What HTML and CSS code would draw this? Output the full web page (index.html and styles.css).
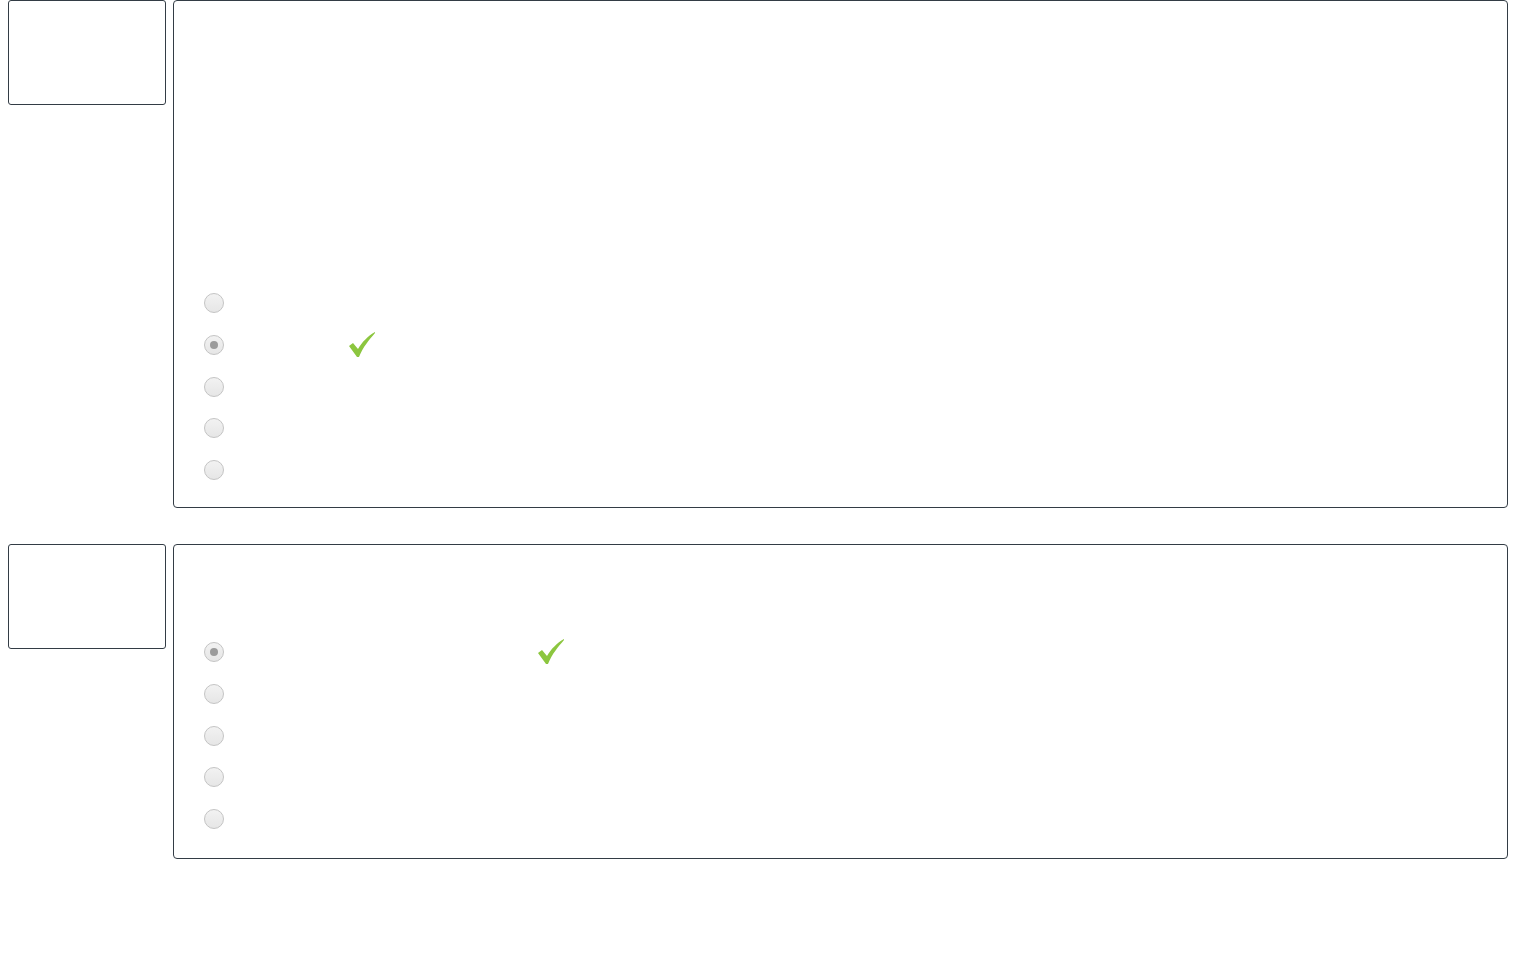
FILE: index.html
```html
<!DOCTYPE html>
<html>
<head>
<meta charset="utf-8">
<link rel="stylesheet" href="styles.css">
</head>
<body>
<div class="page">
  <section class="question">
    <div class="qnum"></div>
    <div class="qbody q1">
      <div class="prompt tall"></div>
      <ul class="answers">
        <li class="answer"><span class="radio"></span></li>
        <li class="answer"><span class="radio checked"></span><svg class="check c1" viewBox="0 0 26 26"><path d="M0 14 L4 11 L9 17 C13 10 19 4 26 0 L26 1 C20 8 14 15 10 25 L8 25 Z"/></svg></li>
        <li class="answer"><span class="radio"></span></li>
        <li class="answer"><span class="radio"></span></li>
        <li class="answer"><span class="radio"></span></li>
      </ul>
    </div>
  </section>
  <section class="question">
    <div class="qnum"></div>
    <div class="qbody q2">
      <div class="prompt short"></div>
      <ul class="answers">
        <li class="answer"><span class="radio checked"></span><svg class="check c2" viewBox="0 0 26 26"><path d="M0 14 L4 11 L9 17 C13 10 19 4 26 0 L26 1 C20 8 14 15 10 25 L8 25 Z"/></svg></li>
        <li class="answer"><span class="radio"></span></li>
        <li class="answer"><span class="radio"></span></li>
        <li class="answer"><span class="radio"></span></li>
        <li class="answer"><span class="radio"></span></li>
      </ul>
    </div>
  </section>
</div>
</body>
</html>
```
FILE: styles.css
```css
html, body {
  margin: 0;
  padding: 0;
  background: #fff;
  font-family: "Liberation Sans", Arial, sans-serif;
}
.page {
  padding: 0 8px;
  display: flex;
  flex-direction: column;
  gap: 36px;
}
.question {
  display: flex;
  align-items: flex-start;
  gap: 7px;
}
.qnum {
  width: 158px;
  height: 105px;
  box-sizing: border-box;
  border: 1px solid #333c45;
  border-radius: 3px;
  flex: none;
}
.qbody {
  flex: 1;
  box-sizing: border-box;
  border: 1px solid #333c45;
  border-radius: 4px;
  padding: 0 30px 27px 30px;
}
.qbody.q2 { padding-bottom: 29px; }
.prompt.tall { height: 292px; }
.prompt.short { height: 97px; }
.answers {
  list-style: none;
  margin: 0;
  padding: 0;
  display: flex;
  flex-direction: column;
  gap: 21.75px;
}
.answer {
  height: 20px;
  display: flex;
  align-items: center;
}
.radio {
  width: 20px;
  height: 20px;
  box-sizing: border-box;
  border-radius: 50%;
  border: 1.5px solid #c4c4c4;
  background: linear-gradient(#f2f2f2, #e6e6e6);
  display: flex;
  align-items: center;
  justify-content: center;
  flex: none;
}
.radio.checked::after {
  content: "";
  width: 8px;
  height: 8px;
  border-radius: 50%;
  background: #9b9b9b;
}
.check {
  width: 26px;
  height: 26px;
  fill: #8cc63f;
  flex: none;
}
.check.c1 { margin-left: 125px; }
.check.c2 { margin-left: 314px; }
```
